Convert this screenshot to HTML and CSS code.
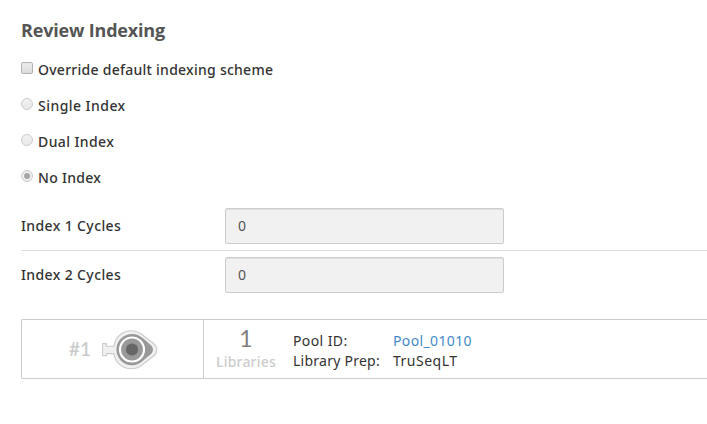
FILE: index.html
```html
<!DOCTYPE html>
<html lang="en">
<head>
<meta charset="utf-8">
<title>Review Indexing</title>
<link rel="stylesheet" href="styles.css">
</head>
<body>
<main class="page">
  <h1 class="title"><span>Review Indexing</span></h1>
  <div class="options">
    <label class="option"><span class="mark box"></span><span class="t-override">Override default indexing scheme</span></label>
    <label class="option"><span class="mark radio"></span><span class="t-single">Single Index</span></label>
    <label class="option"><span class="mark radio"></span><span class="t-dual">Dual Index</span></label>
    <label class="option"><span class="mark radio checked"></span><span class="t-none">No Index</span></label>
  </div>
  <div class="field first"><span class="name">Index 1 Cycles</span><div class="input">0</div></div>
  <div class="field second"><span class="name">Index 2 Cycles</span><div class="input">0</div></div>
  <section class="pool">
    <div class="well">
      <span class="num">#1</span>
      <svg class="tube" width="56" height="40" viewBox="0 0 56 40">
        <path d="M.6 13.6H4.4V16.2H11.8C13.2 7.5 20 .8 29 .8C34.500 .8 38 2.800 41 5.200L51.300 13.200C56 17 56 22.500 51.300 26.300L41 34.300C38 36.800 34.500 38.700 29 38.700C20 38.700 13.200 32.300 11.800 23.600H4.400V25.700H.6Z" fill="#f0f0f0" stroke="#ccc" stroke-width="1.100"/>
        <path d="M30 4C35 4 38 6 41 8.300L49 15.200C51.600 17.600 51.600 21.700 49 24.100L41 30.700C38 33.300 34.500 35.200 30 35.200A15.600 15.600 0 0 1 30 4Z" fill="#999"/>
        <circle cx="30" cy="19.500" r="12" fill="#999" stroke="#fff" stroke-width="2.200"/>
        <circle cx="30" cy="19.500" r="6.100" fill="#666"/>
      </svg>
    </div>
    <div class="count"><span class="big">1</span><span class="libs">Libraries</span></div>
    <div class="details">
      <span class="t-id">Pool ID:</span><a class="t-pool">Pool_01010</a>
      <span class="t-prep">Library Prep:</span><span class="t-kit">TruSeqLT</span>
    </div>
  </section>
</main>
</body>
</html>
```
FILE: styles.css
```css
* { box-sizing: border-box; }
body {
  margin: 0;
  background: #fff;
  color: #333;
  font: 500 14px/20px "Noto Sans", "Open Sans", sans-serif;
  overflow: hidden;
}
.page { padding: 18px 0 0 21px; }
.title {
  margin: 0;
  height: 34px;
  font: 700 18px/24px "Open Sans", sans-serif;
  letter-spacing: -.18px;
  color: #555;
  white-space: nowrap;
}
.option {
  display: flex;
  height: 36px;
  padding-top: 8px;
  white-space: nowrap;
}
.t-override { letter-spacing: .26px; }
.t-single { letter-spacing: .46px; }
.t-dual { letter-spacing: .4px; }
.t-none { letter-spacing: .3px; }
.mark {
  flex: none;
  width: 12px;
  height: 12px;
  margin: 2px 5px 0 0;
  border: 1px solid #b2b2b2;
  background: linear-gradient(#ededed, #dcdcdc);
}
.box { border-radius: 2px; }
.radio {
  border-radius: 50%;
  border-color: #ccc;
  background: linear-gradient(#f2f2f2, #e8e8e8);
}
.checked { background: radial-gradient(circle, #a6a6a6 2.5px, #ededed 3.5px); }
.field { display: flex; align-items: center; }
.first {
  height: 55px;
  padding-top: 12px;
  padding-bottom: 6px;
  border-bottom: 1px solid #ddd;
}
.second { height: 48px; }
.name { width: 204px; letter-spacing: .38px; }
.input {
  width: 279px;
  height: 36px;
  padding: 0 12px;
  border: 1px solid #ccc;
  border-radius: 2px;
  background: #f1f1f1;
  box-shadow: inset 0 1px 1px rgba(0, 0, 0, .075);
  font-weight: 400;
  line-height: 34px;
  color: #555;
}
.pool {
  display: flex;
  height: 60px;
  margin-top: 20px;
  border: 1px solid #ccc;
  border-right: 0;
  border-radius: 2px 0 0 2px;
}
.well {
  display: flex;
  align-items: center;
  width: 182px;
  padding-left: 47px;
  border-right: 1px solid #ccc;
}
.num {
  width: 33px;
  font-family: Lato, sans-serif;
  font-size: 19px;
  font-weight: 600;
  color: #ccc;
}
.tube { position: relative; top: 1px; }
.count {
  display: flex;
  flex-direction: column;
  align-items: center;
  width: 84px;
}
.big {
  height: 32px;
  font-family: Lato, sans-serif;
  font-size: 23px;
  font-weight: 400;
  line-height: 36px;
  color: #808080;
}
.libs { color: #ccc; letter-spacing: .2px; }
.details {
  display: grid;
  grid-template-columns: 100px auto;
  align-content: start;
  padding: 11px 0 0 5px;
  font-weight: 400;
  white-space: nowrap;
}
.t-id { letter-spacing: .4px; }
.t-prep { letter-spacing: .25px; }
.t-pool { letter-spacing: .36px; color: #428bca; }
.t-kit { letter-spacing: .5px; }
```
